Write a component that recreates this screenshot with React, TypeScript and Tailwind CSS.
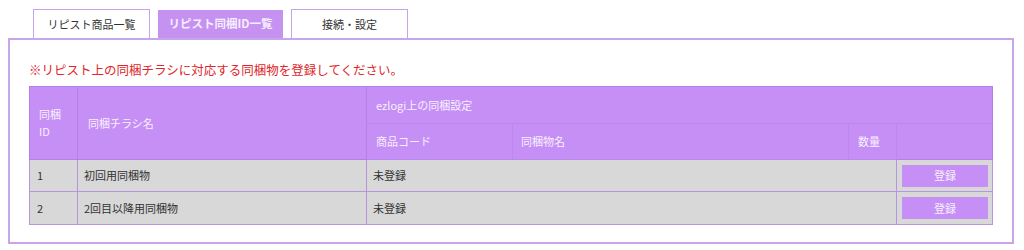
import React from "react";

const font = "font-['Meiryo','Noto_Sans_CJK_JP',sans-serif]";

export default function App() {
  const rows = [
    { id: "1", name: "初回用同梱物" },
    { id: "2", name: "2回目以降用同梱物" },
  ];
  return (
    <div className={`w-[1024px] h-[250px] bg-white ${font} overflow-hidden`}>
      <div className="flex items-end gap-2 pl-[33px] pt-[9px]">
        <div className="w-[117px] h-[29px] border border-b-0 border-[#c6a4ec] bg-white flex items-center justify-center text-[11px] text-[#333]">
          リピスト商品一覧
        </div>
        <div className="w-[125px] h-[28px] bg-[#c592f2] flex items-center justify-center text-[11.5px] font-bold text-[#f6eeff]">
          リピスト同梱ID一覧
        </div>
        <div className="w-[117px] h-[29px] border border-b-0 border-[#c6a4ec] bg-white flex items-center justify-center text-[11px] text-[#333]">
          接続・設定
        </div>
      </div>
      <div className="ml-[8px] w-[1006px] border-2 border-[#c7a5ec] px-[19px] pt-[17px] pb-[17px]">
        <p className="text-[12.5px] text-[#e0262a] leading-[26px] mb-[3px]">
          ※リピスト上の同梱チラシに対応する同梱物を登録してください。
        </p>
        <table className="w-[963px] table-fixed border-collapse text-[11px]">
          <colgroup>
            <col className="w-[48px]" />
            <col className="w-[289px]" />
            <col className="w-[146px]" />
            <col className="w-[336px]" />
            <col className="w-[48px]" />
            <col className="w-[96px]" />
          </colgroup>
          <thead className="bg-[#c68ff5] text-[#f7efff]">
            <tr className="h-[37px]">
              <th rowSpan={2} className="border border-[#b47fe6] text-left font-normal align-middle pl-[9px] leading-[17px]">
                同梱
                <br />
                ID
              </th>
              <th rowSpan={2} className="border border-[#b47fe6] text-left font-normal align-middle pl-[10px]">
                同梱チラシ名
              </th>
              <th colSpan={4} className="border border-[#b47fe6] border-b-[#bd88ee] text-left font-normal pl-[9px]">
                ezlogi上の同梱設定
              </th>
            </tr>
            <tr className="h-[36px]">
              <th className="border border-[#bd88ee] text-left font-normal pl-[9px]">商品コード</th>
              <th className="border border-[#bd88ee] text-left font-normal pl-[8px]">同梱物名</th>
              <th className="border border-[#bd88ee] text-left font-normal pl-[9px]">数量</th>
              <th className="border border-[#b47fe6] font-normal"></th>
            </tr>
          </thead>
          <tbody className="bg-[#d8d8d8] text-[#333]">
            {rows.map((r, i) => (
              <tr key={r.id} className={i === 0 ? "h-[32px]" : "h-[33px]"}>
                <td className="border border-[#b596dc] pl-[7px]">{r.id}</td>
                <td className="border border-[#b596dc] pl-[6px]">{r.name}</td>
                <td colSpan={3} className="border border-[#b596dc] pl-[6px]">未登録</td>
                <td className="border border-[#b596dc] px-[5px]">
                  <button className="w-[86px] h-[22px] bg-[#c68ff5] text-[#f7efff] text-[11px] flex items-center justify-center">
                    登録
                  </button>
                </td>
              </tr>
            ))}
          </tbody>
        </table>
      </div>
    </div>
  );
}
